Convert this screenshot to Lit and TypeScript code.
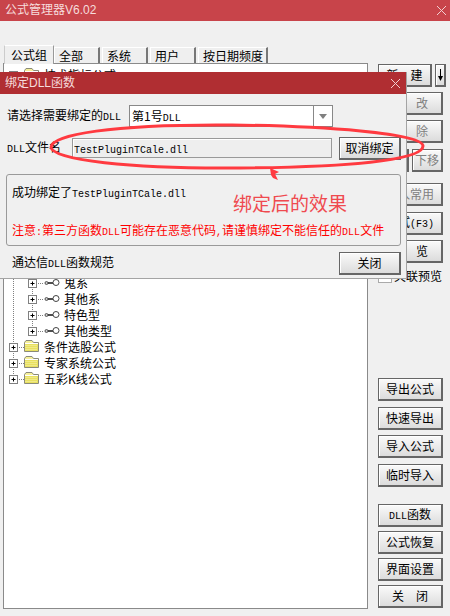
import { LitElement, html, css, svg } from "lit";
import { customElement } from "lit/decorators.js";

const m = (t: string) => html`<span class="m">${t}</span>`;
const FOLDER = svg`
  <path d="M20.5 12.5V3.5L22 1.5H28L29.5 3.5H34.5V12.5Z" fill="#f6f09a" stroke="#8a8a7a"/>
  <rect x="21" y="5" width="13" height="7" fill="#e8e060"/>
  <path d="M21 4.5H34" stroke="#fff"/>
  <path d="M21.5 6.5h12M21.5 8.5h12M21.5 10.5h12" stroke="#f8f4b0" stroke-dasharray="1 1"/>`;

function rootIcon(open: boolean, first: boolean, last: boolean) {
  return html`<svg class="ic" width="36" height="16" viewBox="0 0 36 16">
    <path d="M9.5 ${first ? 8 : 0}V${last ? 8 : 16}M13 8.5H20" stroke="#808080" stroke-dasharray="1 1" fill="none"/>
    <rect x="5.5" y="4.5" width="8" height="8" fill="#fff" stroke="#808080"/>
    <path d="M7.5 8.5h4${open ? "" : "M9.5 6.5v4"}" stroke="#000"/>
    ${FOLDER}
  </svg>`;
}
function childIcon(last: boolean) {
  return html`<svg class="ic" width="56" height="16" viewBox="0 0 56 16">
    <path d="M9.5 0V16M28.5 0V${last ? 8 : 16}M32 8.5H40" stroke="#808080" stroke-dasharray="1 1" fill="none"/>
    <rect x="24.5" y="4.5" width="8" height="8" fill="#fff" stroke="#808080"/>
    <path d="M26.5 8.5h4M28.5 6.5v4" stroke="#000"/>
    <circle cx="42.5" cy="8" r="1.5" fill="#ccc" stroke="#555"/>
    <path d="M44 8H49" stroke="#222" stroke-width="1.6"/>
    <circle cx="52" cy="7.5" r="3" fill="#fff" stroke="#444"/>
  </svg>`;
}

const CHILDREN = ["鬼系", "其他系", "特色型", "其他类型"];

@customElement("app-root")
export class AppRoot extends LitElement {
  static styles = css`
    :host { display: block; position: relative; width: 450px; height: 616px; overflow: hidden; background: #f0f0f0;
      font: 12px/16px "Noto Sans CJK SC", sans-serif; color: #000; }
    .m { font: 10px/16px "Liberation Mono", monospace; }
    .win { display: flex; flex-direction: column; height: 616px; }
    .title { height: 21px; flex: none; display: flex; align-items: center; justify-content: space-between; box-sizing: border-box; padding: 0 3px 0 5px;
      background: #c8444a; color: #f6dcdc; line-height: 21px; }
    .title.d { height: 22px; background: #b02e32; }
    .title.d { padding-right: 5px; }
    .tl { font: 12px/21px "Liberation Sans", "Noto Sans CJK SC", sans-serif; }
    .x { display: block; }
    .tabs { margin: 24px 0 0 4px; height: 18px; display: flex; align-items: flex-end; flex: none; position: relative; z-index: 1; }
    .tab { height: 16px; box-sizing: border-box; border: 1px solid #fff; border-right: 2px solid #777; border-bottom: 0; margin-right: 2px;
      padding-left: 4px; display: flex; align-items: center; background: #efefef; white-space: nowrap; }
    .tab.on { height: 19px; width: 50px; margin-right: 0; padding-left: 6px; margin-bottom: -1px; border-left: 1px solid #ccc; border-right: 1px solid #999; }
    .w46 { width: 46px; } .w70 { width: 70px; }
    .content { display: flex; flex: 1; min-height: 0; padding: 0 0 7px 3px; }
    .tree { width: 365px; box-sizing: border-box; background: #fff; border: 1px solid #8a8a8a; padding-top: 3px; overflow: hidden; }
    .row { display: flex; height: 16px; align-items: center; white-space: nowrap; }
    .row span { margin-left: 4px; }
    .covered { height: 192px; }
    .ic { flex: none; display: block; }
    .side { width: 65px; margin-left: 10px; padding-top: 1px; display: flex; flex-direction: column; }
    .btn { height: 23px; flex: none; box-sizing: border-box; border: 1px solid #666; border-right-width: 2px; border-bottom-width: 2px; box-shadow: inset 1px 1px 0 #fff;
      background: linear-gradient(#fafafa, #dcdcdc); display: flex; align-items: center; justify-content: center; gap: 12px; white-space: nowrap; }
    .off { color: #808080; }
    .cv { visibility: hidden; }
    .pair { display: flex; gap: 3px; }
    .w54 { width: 54px; } .w11 { width: 11px; } .w31 { width: 31px; }
    .mt4 { margin-top: 4px; } .mt5 { margin-top: 5px; } .mt6 { margin-top: 6px; }
    .mt11 { margin-top: 11px; } .mt17 { margin-top: 17px; } .mt95 { margin-top: 95px; }
    .check { display: flex; align-items: center; gap: 2px; height: 15px; white-space: nowrap; }
    .box { width: 12px; height: 12px; background: #fff; border: 1px solid #aaa; flex: none; }
    .dlg { position: absolute; left: 0; top: 72px; width: 407px; height: 207px; box-sizing: border-box; background: #f0f0f0; border-right: 1px solid #a4a4a4; border-bottom: 1px solid #a4a4a4; }
    .dbody { padding: 11px 5px 0 6px; }
    .line { display: flex; align-items: center; height: 22px; }
    .lab { padding-left: 1px; box-sizing: border-box; white-space: nowrap; }
    .l122 { width: 123px; } .l65 { width: 66px; }
    .sel { width: 204px; height: 22px; box-sizing: border-box; background: #fff; border: 1px solid #888; display: flex; }
    .sel b { flex: 1; font-weight: normal; padding-left: 2px; line-height: 20px; }
    .sel i { width: 18px; border-left: 1px solid #888; display: flex; align-items: center; justify-content: center; }
    .tri { width: 0; height: 0; border: 4px solid transparent; border-top: 5px solid #808080; border-bottom: 0; }
    .field { width: 260px; height: 20px; box-sizing: border-box; background: #eeeeee; border: 1px solid #999; box-shadow: inset 1px 1px 0 #fff; padding-left: 1px; line-height: 18px; }
    .field .m { line-height: 18px; }
    .push { margin-left: auto; }
    .w62 { width: 62px; }
    .mt10 { margin-top: 10px; }
    .group { margin-top: 15px; height: 72px; box-sizing: border-box; border: 1px solid #9a9a9a; border-radius: 3px; padding: 9px 0 0 5px; }
    .red { color: #f00; margin-top: 19px; white-space: nowrap; }
    .foot { margin-top: 6px; padding-left: 6px; }
    .note { position: absolute; left: 233px; top: 190px; font-size: 19px; line-height: 26px; color: #ef4a4f; white-space: nowrap; }
    .ink { position: absolute; left: 0; top: 0; pointer-events: none; }
  `;

  render() {
    const closeX = html`<svg class="x" width="11" height="11" viewBox="0 0 11 11"><path d="M1 1L10 10M10 1L1 10" stroke="#f2d0d0" fill="none"/></svg>`;
    return html`
      <div class="win">
        <div class="title"><span class="tl">公式管理器V6.02</span>${closeX}</div>
        <div class="tabs">
          <div class="tab on">公式组</div>
          <div class="tab w46">全部</div>
          <div class="tab w46">系统</div>
          <div class="tab w46">用户</div>
          <div class="tab w70">按日期频度</div>
        </div>
        <div class="content">
          <div class="tree">
            <div class="row">${rootIcon(true, true, false)}<span>技术指标公式</span></div>
            <div class="covered"></div>
            ${CHILDREN.map((c, i) => html`<div class="row">${childIcon(i === CHILDREN.length - 1)}<span>${c}</span></div>`)}
            <div class="row">${rootIcon(false, false, false)}<span>条件选股公式</span></div>
            <div class="row">${rootIcon(false, false, false)}<span>专家系统公式</span></div>
            <div class="row">${rootIcon(false, false, true)}<span>五彩K线公式</span></div>
          </div>
          <div class="side">
            <div class="pair">
              <div class="btn w54"><span>新</span><span>建</span></div>
              <div class="btn w11"><svg width="7" height="13" viewBox="0 0 7 13"><path d="M3.5 0V9" stroke="#000"/><path d="M1 7H6L3.5 12Z" fill="#000"/></svg></div>
            </div>
            <div class="btn off mt5"><span class="cv">修</span><span>改</span></div>
            <div class="btn off mt5"><span class="cv">删</span><span>除</span></div>
            <div class="pair mt6"><div class="btn off w31"><span class="cv">上移</span></div><div class="btn off w31">下移</div></div>
            <div class="btn off mt11">加入常用</div>
            <div class="btn mt6"><span>测试${m("(F3)")}</span></div>
            <div class="btn mt5"><span class="cv">浏</span><span>览</span></div>
            <div class="check mt5"><div class="box"></div><span>关联预览</span></div>
            <div class="btn mt95">导出公式</div>
            <div class="btn mt6">快速导出</div>
            <div class="btn mt5">导入公式</div>
            <div class="btn mt6">临时导入</div>
            <div class="btn mt17"><span>${m("DLL")}函数</span></div>
            <div class="btn mt4">公式恢复</div>
            <div class="btn mt4">界面设置</div>
            <div class="btn mt4"><span>关</span><span>闭</span></div>
          </div>
        </div>
      </div>

      <div class="dlg">
        <div class="title d"><span class="tl">绑定DLL函数</span>${closeX}</div>
        <div class="dbody">
          <div class="line">
            <div class="lab l122">请选择需要绑定的${m("DLL")}</div>
            <div class="sel"><b>第1号${m("DLL")}</b><i><span class="tri"></span></i></div>
          </div>
          <div class="line mt10">
            <div class="lab l65">${m("DLL")}文件名</div>
            <div class="field">${m("TestPluginTCale.dll")}</div>
            <div class="btn w62 push">取消绑定</div>
          </div>
          <div class="group">
            <div>成功绑定了${m("TestPluginTCale.dll")}</div>
            <div class="red">注意${m(":")}第三方函数${m("DLL")}可能存在恶意代码${m(",")}请谨慎绑定不能信任的${m("DLL")}文件</div>
          </div>
          <div class="line foot">
            <div>通达信${m("DLL")}函数规范</div>
            <div class="btn w62 push">关闭</div>
          </div>
        </div>
      </div>

      <svg class="ink" width="450" height="616" viewBox="0 0 450 616">
        <path d="M232 125C110 124 52 135 51 147C52 160 130 169 240 168C350 167 423 160 423 146C423 133 320 126 232 125Z" fill="none" stroke="#ff3a40" stroke-width="3"/>
        <path d="M270 168L279 172L275 174L278 180L273 178L271 175Z" fill="#ff3a40"/>
      </svg>
      <div class="note">绑定后的效果</div>
    `;
  }
}
